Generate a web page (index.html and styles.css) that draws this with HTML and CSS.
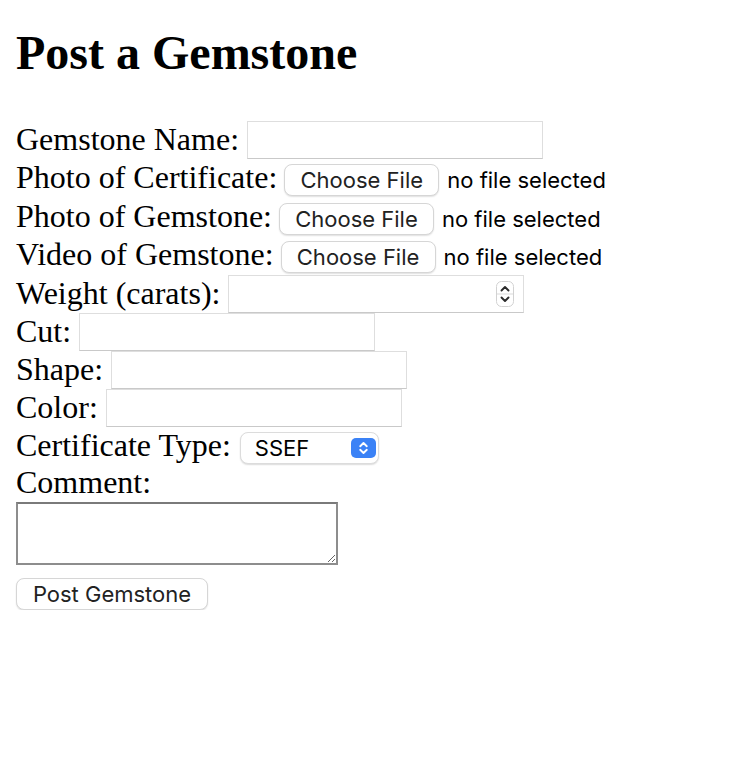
FILE: index.html
```html
<!DOCTYPE html>
<html lang="en">
<head>
<meta charset="utf-8">
<title>Post a Gemstone</title>
<link rel="stylesheet" href="styles.css">
</head>
<body>
<h1 class="title">Post a Gemstone</h1>
<form class="gem-form">
  <div class="row">
    <label class="lbl" for="name">Gemstone Name:</label>
    <input class="field" id="name" type="text">
  </div>
  <div class="row tall">
    <span class="lbl">Photo of Certificate:</span>
    <button type="button" class="btn file-btn">Choose File</button>
    <span class="file-note">no file selected</span>
  </div>
  <div class="row">
    <span class="lbl">Photo of Gemstone:</span>
    <button type="button" class="btn file-btn">Choose File</button>
    <span class="file-note">no file selected</span>
  </div>
  <div class="row tall">
    <span class="lbl">Video of Gemstone:</span>
    <button type="button" class="btn file-btn">Choose File</button>
    <span class="file-note">no file selected</span>
  </div>
  <div class="row">
    <label class="lbl" for="weight">Weight (carats):</label>
    <div class="field number-field">
      <input class="bare" id="weight" type="text">
      <svg class="spinner" width="18" height="26" viewBox="0 0 18 26">
        <rect x="0.5" y="0.5" width="17" height="25" rx="5" fill="#fff" stroke="#d2d2d2"/>
        <line x1="1" y1="13" x2="17" y2="13" stroke="#d9d9d9"/>
        <path d="M5.5 9.5 L9 6 L12.5 9.5" fill="none" stroke="#2b2b2b" stroke-width="1.9" stroke-linecap="round" stroke-linejoin="round"/>
        <path d="M5.5 16.5 L9 20 L12.5 16.5" fill="none" stroke="#2b2b2b" stroke-width="1.9" stroke-linecap="round" stroke-linejoin="round"/>
      </svg>
    </div>
  </div>
  <div class="row">
    <label class="lbl" for="cut">Cut:</label>
    <input class="field" id="cut" type="text">
  </div>
  <div class="row">
    <label class="lbl" for="shape">Shape:</label>
    <input class="field" id="shape" type="text">
  </div>
  <div class="row">
    <label class="lbl" for="color">Color:</label>
    <input class="field" id="color" type="text">
  </div>
  <div class="row">
    <span class="lbl">Certificate Type:</span>
    <div class="select">
      <span class="select-value">SSEF</span>
      <svg class="select-icon" width="25" height="20" viewBox="0 0 25 20">
        <rect x="0" y="0" width="25" height="20" rx="5" fill="#3b82f6"/>
        <path d="M9.2 8.2 L12.5 5 L15.8 8.2" fill="none" stroke="#fff" stroke-width="1.9" stroke-linecap="round" stroke-linejoin="round"/>
        <path d="M9.2 11.8 L12.5 15 L15.8 11.8" fill="none" stroke="#fff" stroke-width="1.9" stroke-linecap="round" stroke-linejoin="round"/>
      </svg>
    </div>
  </div>
  <div class="row short">
    <label class="lbl" for="comment">Comment:</label>
  </div>
  <textarea class="comment" id="comment"></textarea>
  <button type="button" class="btn submit-btn">Post Gemstone</button>
</form>
</body>
</html>
```
FILE: styles.css
```css
html, body {
  background: #fff;
}
body {
  margin: 0;
  padding: 0 16px;
  font-family: "Liberation Serif", "Times New Roman", serif;
  color: #000;
}
.title {
  font-size: 48px;
  line-height: 53px;
  font-weight: bold;
  margin: 26px 0 42px;
}
.gem-form {
  display: flex;
  flex-direction: column;
  align-items: flex-start;
}
.row {
  display: flex;
  align-items: center;
  gap: 7px;
  height: 38px;
  font-size: 32px;
  line-height: 38px;
  white-space: nowrap;
}
.row.tall {
  height: 39px;
}
.row.short {
  height: 37px;
}
.lbl {
  font-size: 32px;
  margin-bottom: 3px;
}
.row .lbl + .field {
  margin-left: 1px;
}
.field {
  box-sizing: border-box;
  width: 296px;
  height: 38px;
  margin: 0;
  padding: 0 6px;
  border: 1px solid #dedede;
  border-bottom-color: #c9c9c9;
  border-radius: 0;
  background: #fff;
  font-family: "Inter", sans-serif;
  font-size: 22px;
  outline: none;
}
.number-field {
  display: flex;
  align-items: center;
  padding: 0 9px 0 6px;
}
.bare {
  flex: 1;
  min-width: 0;
  border: 0;
  padding: 0;
  margin: 0;
  height: 30px;
  font-family: "Inter", sans-serif;
  font-size: 22px;
  outline: none;
  background: transparent;
}
.spinner {
  display: block;
  flex: none;
}
.btn {
  box-sizing: border-box;
  height: 32px;
  margin: 0;
  background: #fff;
  border: 1px solid #d6d6d6;
  border-radius: 8px;
  box-shadow: 0 1px 1.5px rgba(0, 0, 0, 0.12);
  font-family: "Inter", sans-serif;
  font-size: 22px;
  line-height: 30px;
  color: #222;
  padding: 0;
  text-align: center;
}
.file-btn {
  width: 155px;
  margin-top: 3px;
}
.file-note {
  font-family: "Inter", sans-serif;
  font-size: 22px;
  color: #000;
  margin-top: 3px;
  margin-left: 1px;
}
.select {
  box-sizing: border-box;
  width: 139px;
  height: 32px;
  margin-top: 4px;
  margin-left: 2px;
  display: flex;
  align-items: center;
  justify-content: space-between;
  padding: 0 2px 0 14px;
  background: #fff;
  border: 1px solid #dcdcdc;
  border-radius: 8px;
  box-shadow: 0 1px 1.5px rgba(0, 0, 0, 0.14);
}
.select-value {
  font-family: "Inter", sans-serif;
  font-size: 22px;
  line-height: 30px;
  color: #000;
}
.select-icon {
  display: block;
}
.comment {
  display: block;
  box-sizing: border-box;
  width: 322px;
  height: 63px;
  margin: 0 0 13px;
  border: 2px solid #8d8d8d;
  border-top-color: #7a7a7a;
  border-radius: 0;
  padding: 4px;
  font-family: "Inter", sans-serif;
  font-size: 22px;
  background: #fff;
  outline: none;
}
.submit-btn {
  width: 192px;
}
```
